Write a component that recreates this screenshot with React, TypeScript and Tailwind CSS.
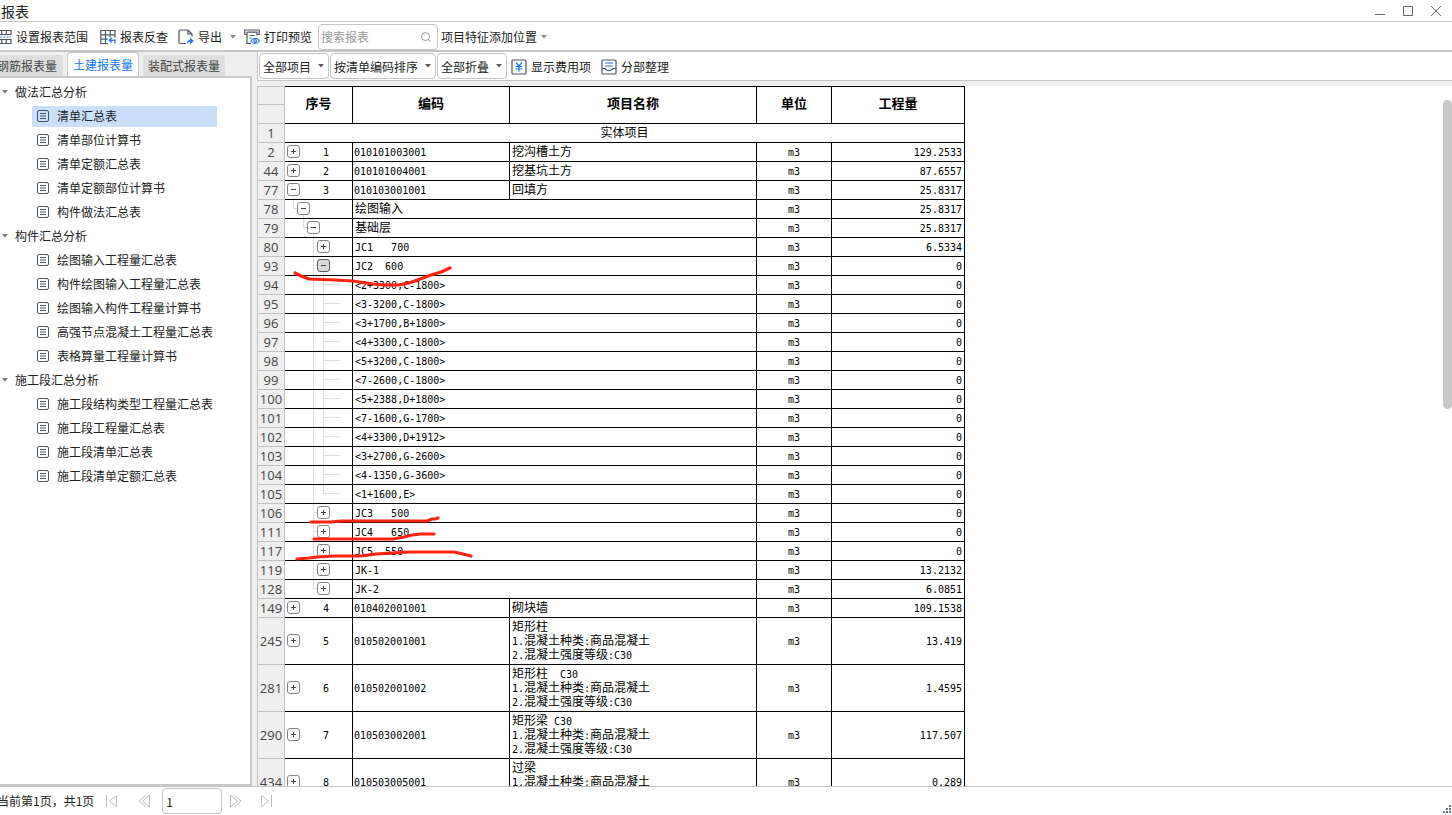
import { Fragment, type ReactNode } from "react";
import { clsx } from "clsx";

type Toggle = "plus" | "minus" | "active";

interface ReportRow {
  line: number;
  seq?: number;
  code?: string;
  name: string[];
  qty: string;
  level: number;
  toggle?: Toggle;
  last?: boolean;
}

const reportGroups = [
  {
    title: "做法汇总分析",
    items: ["清单汇总表", "清单部位计算书", "清单定额汇总表", "清单定额部位计算书", "构件做法汇总表"],
  },
  {
    title: "构件汇总分析",
    items: [
      "绘图输入工程量汇总表",
      "构件绘图输入工程量汇总表",
      "绘图输入构件工程量计算书",
      "高强节点混凝土工程量汇总表",
      "表格算量工程量计算书",
    ],
  },
  {
    title: "施工段汇总分析",
    items: ["施工段结构类型工程量汇总表", "施工段工程量汇总表", "施工段清单汇总表", "施工段清单定额汇总表"],
  },
];

const axisPositions = [
  "<2+3300,C-1800>",
  "<3-3200,C-1800>",
  "<3+1700,B+1800>",
  "<4+3300,C-1800>",
  "<5+3200,C-1800>",
  "<7-2600,C-1800>",
  "<5+2388,D+1800>",
  "<7-1600,G-1700>",
  "<4+3300,D+1912>",
  "<3+2700,G-2600>",
  "<4-1350,G-3600>",
  "<1+1600,E>",
];

const rows: ReportRow[] = [
  { line: 2, seq: 1, code: "010101003001", name: ["挖沟槽土方"], qty: "129.2533", level: 0, toggle: "plus" },
  { line: 44, seq: 2, code: "010101004001", name: ["挖基坑土方"], qty: "87.6557", level: 0, toggle: "plus" },
  { line: 77, seq: 3, code: "010103001001", name: ["回填方"], qty: "25.8317", level: 0, toggle: "minus" },
  { line: 78, name: ["绘图输入"], qty: "25.8317", level: 1, toggle: "minus", last: true },
  { line: 79, name: ["基础层"], qty: "25.8317", level: 2, toggle: "minus", last: true },
  { line: 80, name: ["JC1   700"], qty: "6.5334", level: 3, toggle: "plus" },
  { line: 93, name: ["JC2  600"], qty: "0", level: 3, toggle: "active" },
  ...axisPositions.map((position, i) => ({
    line: 94 + i,
    name: [position],
    qty: "0",
    level: 4,
    last: i === axisPositions.length - 1,
  })),
  { line: 106, name: ["JC3   500"], qty: "0", level: 3, toggle: "plus" },
  { line: 111, name: ["JC4   650"], qty: "0", level: 3, toggle: "plus" },
  { line: 117, name: ["JC5  550"], qty: "0", level: 3, toggle: "plus" },
  { line: 119, name: ["JK-1"], qty: "13.2132", level: 3, toggle: "plus" },
  { line: 128, name: ["JK-2"], qty: "6.0851", level: 3, toggle: "plus", last: true },
  { line: 149, seq: 4, code: "010402001001", name: ["砌块墙"], qty: "109.1538", level: 0, toggle: "plus" },
  { line: 245, seq: 5, code: "010502001001", name: ["矩形柱", "1.混凝土种类:商品混凝土", "2.混凝土强度等级:C30"], qty: "13.419", level: 0, toggle: "plus" },
  { line: 281, seq: 6, code: "010502001002", name: ["矩形柱  C30", "1.混凝土种类:商品混凝土", "2.混凝土强度等级:C30"], qty: "1.4595", level: 0, toggle: "plus" },
  { line: 290, seq: 7, code: "010503002001", name: ["矩形梁 C30", "1.混凝土种类:商品混凝土", "2.混凝土强度等级:C30"], qty: "117.507", level: 0, toggle: "plus" },
  { line: 434, seq: 8, code: "010503005001", name: ["过梁", "1.混凝土种类:商品混凝土", "2.混凝土强度等级:C30"], qty: "0.289", level: 0, toggle: "plus" },
];

const indentClass = ["pl-0.5", "pl-3", "pl-[22px]", "pl-8", "pl-8"];
const cell = "border-r border-b border-black p-0";
const bodyCell = "border-r border-b border-black p-0 pb-0.5";
const lineHead = "border-x border-b border-[#c0c0c0] bg-[#efefef] p-0 text-center font-['Open_Sans',sans-serif] text-[13px] font-normal leading-4 text-[#444]";

// Latin and digits are set in a half-width mono face, Chinese in the full-width one
function GridText({ text }: { text: string }) {
  return (
    <>
      {text.split(/([\x20-\x7e]+)/).map((part, i) =>
        /^[\x20-\x7e]+$/.test(part) ? (
          <span key={i} className="font-['DejaVu_Sans_Mono',monospace] text-[10px] leading-none">{part}</span>
        ) : (
          <Fragment key={i}>{part}</Fragment>
        )
      )}
    </>
  );
}

function Caret({ className }: { className?: string }) {
  return (
    <svg viewBox="0 0 6 4" className={clsx("h-1 w-1.5 shrink-0", className)} fill="currentColor" aria-hidden="true">
      <path d="M0 0h6L3 3.5z" />
    </svg>
  );
}

function ToggleButton({ state, line }: { state: Toggle; line: number }) {
  return (
    <button
      type="button"
      aria-label={`${state === "plus" ? "展开" : "折叠"} ${line}`}
      className={clsx(
        "relative flex size-[13px] shrink-0 items-center justify-center rounded-[3px] border",
        state === "active" ? "border-[#555b66] bg-[#d9d9d9]" : "border-[#858585] bg-white"
      )}
    >
      <svg viewBox="0 0 5 5" className="size-[5px]" stroke="#444" strokeWidth="1" shapeRendering="crispEdges" aria-hidden="true">
        <path d={state === "plus" ? "M0 2.5h5M2.5 0v5" : "M0 2.5h5"} />
      </svg>
    </button>
  );
}

function TreeGuides({ row }: { row: ReportRow }) {
  const x = row.level * 10 - 1.5;
  let d = "";
  if (row.level === 4) d += "M28.5 0V18M38.5 0V" + (row.last ? "8.5" : "18") + "M38.5 8.5H55";
  else if (row.level > 0) d += `M${x} 0V${row.last ? "8.5" : "18"}M${x} 8.5h4`;
  if (row.toggle === "minus" || row.toggle === "active") d += `M${x + 10} 10V18`;
  if (!d) return null;
  return (
    <svg className="pointer-events-none absolute inset-0 h-[18px] w-full" fill="none" stroke="#dedede" shapeRendering="crispEdges" aria-hidden="true">
      <path d={d} />
    </svg>
  );
}

function ToolButton({ icon, label, caret, className }: { icon?: ReactNode; label: string; caret?: boolean; className?: string }) {
  return (
    <button type="button" className={clsx("flex shrink-0 items-center gap-1 whitespace-nowrap", className)}>
      {icon}
      <span>{label}</span>
      {caret && <Caret className="text-[#888]" />}
    </button>
  );
}

function FilterSelect({ label, value }: { label: string; value: string }) {
  return (
    <div className="relative shrink-0">
      <select
        aria-label={label}
        className="h-[26px] appearance-none rounded border border-[#c4c4c4] bg-white pt-0.5 pr-4 pl-[3px] text-xs text-[#222]"
      >
        <option>{value}</option>
      </select>
      <Caret className="pointer-events-none absolute top-[11px] right-[5px] text-[#555b66]" />
    </div>
  );
}

const iconProps = { viewBox: "0 0 16 16", fill: "none", stroke: "#4d5566", strokeWidth: 1.2, className: "size-4 shrink-0", "aria-hidden": true } as const;

function RangeIcon() {
  return (
    <svg {...iconProps} className="-ml-1 size-4 shrink-0">
      <path d="M1 6V1.500h14V6M1 10v4.500h14V10M5.700 1.500V6M10.300 1.500V6M5.700 10v4.500M10.300 10v4.500M1 5.500h14M1 10.500h14" />
      <path d="M1 8h14" stroke="#2b7de9" strokeDasharray="2 1.2" />
    </svg>
  );
}

function ReverseIcon() {
  return (
    <svg {...iconProps}>
      <path d="M15 8.500V1.500H.8v13H8M.8 5.800H15M.8 10.200h7M5.500 1.500v13M10.200 1.500v7" />
      <path d="M15 14.500v-3.300H9.500M11.700 8.800 9.300 11.200l2.400 2.400" stroke="#2b7de9" strokeWidth="1.4" />
    </svg>
  );
}

function ExportIcon() {
  return (
    <svg {...iconProps}>
      <path d="M8 14.500H2.200A1.200 1.200 0 0 1 1 13.300V2.200A1.200 1.200 0 0 1 2.200 1H10l4 4v2.500M10 1v4h4" />
      <path d="M9 15c.2-2.800 1-4 3-4V8.500L15.800 12 12 15v-2.200c-1.500 0-2.200.6-3 2.200z" fill="#1677ef" stroke="none" />
    </svg>
  );
}

function PreviewIcon() {
  return (
    <svg {...iconProps}>
      <path d="M3 5.500H.8V1h14.400v4.500H13M3 3.200h10v3.300M3 3.200V14.500h4M5.500 6.500h5M5.500 9h2" />
      <path d="M6.800 12c2.300-3.500 6.500-3.500 8.700 0-2.200 3.500-6.400 3.500-8.700 0z" stroke="#2b7de9" />
      <circle cx="11.200" cy="12" r="1.300" stroke="#2b7de9" />
    </svg>
  );
}

function FeeIcon() {
  return (
    <svg {...iconProps}>
      <rect x="1" y="1" width="14" height="14" rx="1" />
      <path d="M5 3.500 8 7l3-3.500M8 7v5.500M4.500 7.500h7M4.500 10h7" stroke="#1677ef" />
    </svg>
  );
}

function SectionIcon() {
  return (
    <svg {...iconProps}>
      <rect x="1" y="1" width="14" height="14" rx="1" />
      <path d="M1 9.500h3.500c.3 3 6.700 3 7 0H15" />
      <path d="M4 4h8M4 7h8" stroke="#1677ef" />
    </svg>
  );
}

function PagerButton({ label, d }: { label: string; d: string }) {
  return (
    <button type="button" aria-label={label} className="shrink-0">
      <svg viewBox="0 0 12 14" className="h-3.5 w-3" fill="none" stroke="#bdbdbd" aria-hidden="true">
        <path d={d} />
      </svg>
    </button>
  );
}

function ReportTree() {
  return (
    <nav aria-label="报表" className="min-h-0 flex-1 overflow-hidden border-y-2 border-r-2 border-[#c8c8ca] bg-white pt-0.5">
      {reportGroups.map((group, g) => (
        <section key={group.title}>
          <h2 className="flex h-6 items-center pl-0.5">
            <Caret className="mr-[7px] text-[#777]" />
            {group.title}
          </h2>
          <ul>
            {group.items.map((item, i) => (
              <li key={item} className="flex h-6 items-center pl-8">
                <a
                  href="#"
                  className={clsx("flex h-[21px] w-[185px] items-center gap-[7px] pl-[5px] whitespace-nowrap", g === 0 && i === 0 && "bg-[#c9dffa]")}
                >
                  <svg viewBox="0 0 13 13" className="size-[13px] shrink-0" fill="none" stroke="#4b5262" aria-hidden="true">
                    <rect x=".5" y=".5" width="11" height="11" rx="1.500" />
                    <path d="M3 3.500h6M3 6h6M3 8.500h6" />
                  </svg>
                  {item}
                </a>
              </li>
            ))}
          </ul>
        </section>
      ))}
    </nav>
  );
}

function ReportTable() {
  return (
    <div className="relative min-h-0 flex-1 overflow-hidden">
      <table className="w-[708px] table-fixed border-separate border-spacing-0 text-xs leading-[14px] text-black">
        <colgroup>
          <col className="w-7" />
          <col className="w-[68px]" />
          <col className="w-[157px]" />
          <col className="w-[247px]" />
          <col className="w-[75px]" />
          <col className="w-[133px]" />
        </colgroup>
        <thead>
          <tr className="h-[19px] text-[13px]">
            <td className={clsx(lineHead, "border-t")} />
            {["序号", "编码", "项目名称", "单位", "工程量"].map((title) => (
              <th key={title} rowSpan={2} scope="col" className={clsx(cell, "border-t pb-1 font-bold")}>
                {title}
              </th>
            ))}
          </tr>
          <tr className="h-[19px]">
            <td className={lineHead} />
          </tr>
        </thead>
        <tbody>
          <tr className="h-[19px]">
            <th scope="row" className={lineHead}>1</th>
            <td colSpan={5} className={clsx(bodyCell, "text-center")}>实体项目</td>
          </tr>
          {rows.map((row) => (
            <tr key={row.line} className={row.name.length > 1 ? "h-[47px]" : "h-[19px]"}>
              <th scope="row" className={lineHead}>{row.line}</th>
              <td className={clsx(bodyCell, "relative")}>
                <TreeGuides row={row} />
                <div className={clsx("flex items-center", indentClass[row.level])}>
                  {row.toggle && <ToggleButton state={row.toggle} line={row.line} />}
                  {row.seq && (
                    <span className="flex-1 text-center">
                      <GridText text={String(row.seq)} />
                    </span>
                  )}
                </div>
              </td>
              {row.code && (
                <td className={clsx(bodyCell, "pl-px")}>
                  <GridText text={row.code} />
                </td>
              )}
              <td colSpan={row.code ? 1 : 2} className={clsx(bodyCell, "pl-0.5 whitespace-pre")}>
                {row.name.map((text) => (
                  <div key={text}>
                    <GridText text={text} />
                  </div>
                ))}
              </td>
              <td className={clsx(bodyCell, "text-center")}>
                <GridText text="m3" />
              </td>
              <td className={clsx(bodyCell, "pr-0.5 text-right")}>
                <GridText text={row.qty} />
              </td>
            </tr>
          ))}
        </tbody>
      </table>

      {/* Hand-drawn review marks */}
      <svg
        className="pointer-events-none absolute top-0 left-0 h-[700px] w-[708px]"
        fill="none"
        stroke="#ff2311"
        strokeWidth="3.200"
        strokeLinecap="round"
        strokeLinejoin="round"
        aria-hidden="true"
      >
        <path d="M38 187 44 190 52 193 78 194 96 195 116 198 127 199 141 199 152 197 166 192 174 189 184 186 193 182" />
        <path d="M54 436H74L84 435H170L175 433H178L181 432" />
        <path d="M57 453H136L147 451 155 449 164 448H177" />
        <path d="M40 473 52 472 60 471 78 470 104 470 119 468 136 467 152 466H197L206 468 214 470" />
      </svg>
      <div className="absolute top-3.5 right-0 h-[309px] w-[9px] rounded-full bg-[#c8c8c8]" />
    </div>
  );
}

export default function App() {
  return (
    <div className="flex h-screen flex-col overflow-hidden bg-white font-['Noto_Sans_CJK_SC',sans-serif] text-xs text-[#222]">
      <header className="flex h-[22px] shrink-0 items-center border-b border-[#c3c5ca] pl-px">
        <h1 className="text-sm leading-5">报表</h1>
        <div className="ml-auto flex items-center gap-[18px] pr-[11px] text-[#666]">
          <button type="button" aria-label="最小化">
            <svg viewBox="0 0 10 10" className="size-2.5" stroke="currentColor" aria-hidden="true">
              <path d="M0 8.500h10" />
            </svg>
          </button>
          <button type="button" aria-label="最大化">
            <svg viewBox="0 0 10 10" className="size-2.5" fill="none" stroke="currentColor" aria-hidden="true">
              <path d="M.5.5h9v9h-9z" />
            </svg>
          </button>
          <button type="button" aria-label="关闭">
            <svg viewBox="0 0 10 10" className="size-2.5" stroke="currentColor" aria-hidden="true">
              <path d="m0 0 10 10M10 0 0 10" />
            </svg>
          </button>
        </div>
      </header>

      <div className="flex h-[30px] shrink-0 items-center border-b-2 border-[#c3c5ca] pt-px">
        <ToolButton icon={<RangeIcon />} label="设置报表范围" className="mr-3" />
        <ToolButton icon={<ReverseIcon />} label="报表反查" className="mr-2.5" />
        <ToolButton icon={<ExportIcon />} label="导出" className="mr-1" />
        <Caret className="mx-1 text-[#888]" />
        <ToolButton icon={<PreviewIcon />} label="打印预览" className="ml-1" />
        <label className="relative ml-1.5 shrink-0">
          <span className="sr-only">搜索报表</span>
          <input
            type="text"
            placeholder="搜索报表"
            className="block h-[26px] w-[120px] rounded border border-[#c4c4c4] pr-6 pl-0.5 leading-6 placeholder:text-[#999]"
          />
          <svg viewBox="0 0 12 12" className="absolute top-[7px] right-[6px] size-3" fill="none" stroke="#999" aria-hidden="true">
            <circle cx="5.500" cy="5.500" r="4" />
            <path d="m8.500 8.500 2 2" />
          </svg>
        </label>
        <ToolButton label="项目特征添加位置" caret className="ml-[3px]" />
      </div>

      <main className="flex min-h-0 flex-1 bg-[#efeff0]">
        <aside className="flex w-[252px] shrink-0 flex-col">
          <div role="tablist" className="flex h-6 items-end gap-1 overflow-hidden">
            <button type="button" role="tab" className="-ml-2 h-[21px] shrink-0 rounded-t bg-[#dedede] pr-1.5 pl-[5px] text-[#444]">
              钢筋报表量
            </button>
            <button
              type="button"
              role="tab"
              aria-selected="true"
              className="h-6 shrink-0 rounded-t border border-b-0 border-[#c8c8ca] bg-white px-[5px] text-[#1677ef]"
            >
              土建报表量
            </button>
            <button type="button" role="tab" className="h-[21px] shrink-0 rounded-t bg-[#dedede] px-[5px] text-[#444]">
              装配式报表量
            </button>
          </div>
          <ReportTree />
        </aside>

        <section className="ml-[5px] flex min-w-0 flex-1 flex-col">
          <div className="flex h-[29px] shrink-0 items-center border-b border-l border-[#c3c5ca] bg-white pl-px">
            <div className="flex gap-px">
              <FilterSelect label="项目范围" value="全部项目" />
              <FilterSelect label="排序方式" value="按清单编码排序" />
              <FilterSelect label="折叠层级" value="全部折叠" />
            </div>
            <ToolButton icon={<FeeIcon />} label="显示费用项" className="ml-1 pt-px" />
            <ToolButton icon={<SectionIcon />} label="分部整理" className="ml-2.5 pt-px" />
          </div>
          <div className="mt-[5px] flex min-h-0 flex-1 flex-col bg-white">
            <ReportTable />
          </div>
        </section>
      </main>

      <footer className="flex h-[29px] shrink-0 items-center border-t border-[#c3c5ca]">
        <span className="-ml-[3px] shrink-0">当前第1页，共1页</span>
        <div className="ml-3 flex items-center gap-5">
          <PagerButton label="首页" d="M.5 1v12M10.500 1.500v11L3.500 7z" />
          <PagerButton label="上一页" d="M7.500 1.500 1 7l6.500 5.500M11.500 1v12L4.500 7z" />
        </div>
        <label className="mr-2 ml-3">
          <span className="sr-only">页码</span>
          <input type="text" defaultValue="1" className="block h-[26px] w-[60px] rounded border border-[#c4c4c4] px-[3px] leading-6" />
        </label>
        <div className="flex items-center gap-[19px]">
          <PagerButton label="下一页" d="M4.500 1.500 11 7l-6.500 5.500M.5 1v12l7-6z" />
          <PagerButton label="末页" d="M10.500 1v12M.5 1.500v11l7-5.500z" />
        </div>
        <svg viewBox="0 0 8 8" className="mt-auto mr-px mb-0.5 ml-auto size-2" fill="#6b7280" shapeRendering="crispEdges" aria-hidden="true">
          <path d="M6 0h2v2H6zM3 3h2v2H3zM6 3h2v2H6zM0 6h2v2H0zM3 6h2v2H3zM6 6h2v2H6z" />
        </svg>
      </footer>
    </div>
  );
}
